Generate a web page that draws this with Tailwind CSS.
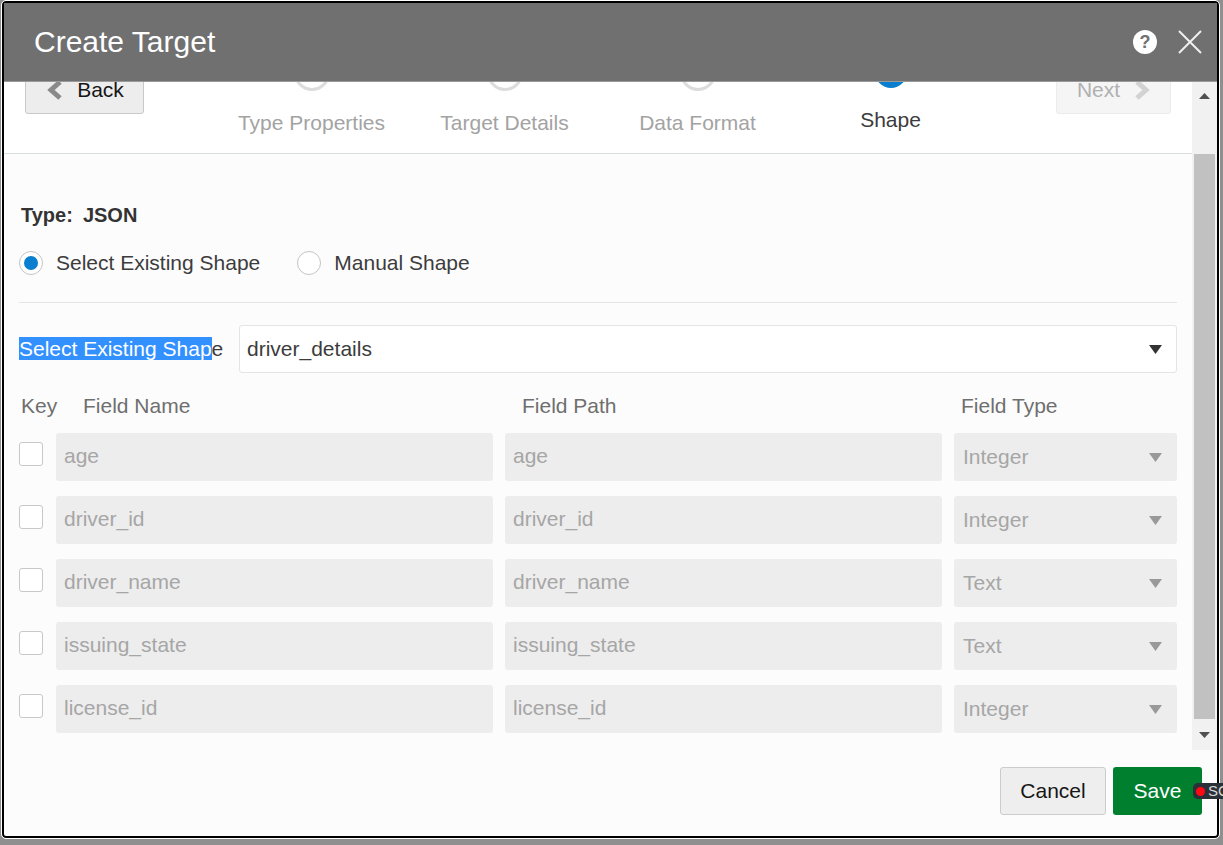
<!DOCTYPE html>
<html lang="en">
<head>
  <meta charset="UTF-8" />
  <title>Create Target</title>
  <script src="https://cdn.jsdelivr.net/npm/@tailwindcss/browser@4"></script>
</head>
<body class="bg-[#8f8f8f] h-[845px] w-[1223px] overflow-hidden font-['Liberation_Sans',Arial,sans-serif]">

  <!-- Dialog -->
  <div class="relative ml-[2px] mt-[1px] w-[1217px] h-[837px] bg-[#fcfcfc] border-2 border-black rounded-[4px] outline outline-1 outline-white flex flex-col">

    <!-- Title bar -->
    <header class="h-[79px] shrink-0 bg-[#707070] border-b border-[#9a9a9a] flex items-center pl-[30px] pr-[14px] relative z-10">
      <h1 class="text-[30px] mb-[2px] text-white">Create Target</h1>
      <div class="ml-auto flex items-center gap-[20px]">
        <svg class="w-[24px] h-[24px]" viewBox="0 0 24 24">
          <circle cx="12" cy="12" r="12" fill="white"/>
          <text x="12" y="18" text-anchor="middle" font-size="18" font-weight="700" fill="#707070" font-family="Liberation Sans">?</text>
        </svg>
        <svg class="w-[26px] h-[26px]" viewBox="0 0 26 26" fill="none" stroke="#efefef" stroke-width="2">
          <path d="M2 2l22 22M24 2L2 24"/>
        </svg>
      </div>
    </header>

    <!-- Scroll area -->
    <div class="h-[668px] shrink-0 flex overflow-hidden">
      <div class="w-[1188px] shrink-0">

        <!-- Train stops -->
        <div class="h-[72px] bg-white border-b border-[#d8dde0] flex items-start overflow-hidden relative">
          <button class="ml-[21px] mt-[-30px] w-[119px] h-[62px] shrink-0 bg-[#ededed] border border-[#c8c8c8] rounded-[3px] flex items-end justify-center pl-[2px] pb-[14px] gap-[14px] text-[21px] leading-[18px] text-[#161616]">
            <svg class="w-[16px] h-[20px] mb-[-1px]" viewBox="0 0 16 20" fill="none" stroke="#8a8a8a" stroke-width="5"><path d="M13 2L4 10l9 8"/></svg>
            Back
          </button>

          <div class="w-[193px] ml-[71px] flex flex-col items-center">
            <div class="w-[36px] h-[36px] mt-[-27px] rounded-full border-[3px] border-[#dcdcdc] bg-white"></div>
            <span class="mt-[20px] text-[21px] leading-[24px] text-[#a3a3a3]">Type Properties</span>
          </div>
          <div class="w-[193px] flex flex-col items-center">
            <div class="w-[36px] h-[36px] mt-[-27px] rounded-full border-[3px] border-[#dcdcdc] bg-white"></div>
            <span class="mt-[20px] text-[21px] leading-[24px] text-[#a3a3a3]">Target Details</span>
          </div>
          <div class="w-[193px] flex flex-col items-center">
            <div class="w-[36px] h-[36px] mt-[-27px] rounded-full border-[3px] border-[#dcdcdc] bg-white"></div>
            <span class="mt-[20px] text-[21px] leading-[24px] text-[#a3a3a3]">Data Format</span>
          </div>
          <div class="w-[193px] flex flex-col items-center">
            <div class="w-[32px] h-[32px] mt-[-26px] rounded-full bg-[#0a7fd0]"></div>
            <span class="mt-[20px] text-[21px] leading-[24px] text-[#3c3c3c]">Shape</span>
          </div>

          <button class="ml-[69px] mt-[-30px] w-[115px] h-[62px] shrink-0 bg-[#f5f5f5] border border-[#ebebeb] rounded-[3px] flex items-end justify-center pb-[14px] gap-[14px] text-[21px] leading-[18px] text-[#b0b0b0]">
            Next
            <svg class="w-[16px] h-[20px] mb-[-1px]" viewBox="0 0 16 20" fill="none" stroke="#d2d2d2" stroke-width="5"><path d="M3 2l9 8-9 8"/></svg>
          </button>
        </div>

        <!-- Form -->
        <div class="pl-[15px] w-[1173px]">
          <div class="mt-[49px] pl-[2px] h-[24px] flex items-center text-[20px] font-bold text-[#333]">Type<span class="mr-[10px]">:</span>JSON</div>

          <div class="mt-[24px] flex items-center h-[24px] text-[21px] text-[#3c3c3c]">
            <span class="w-[24px] h-[24px] rounded-full border border-[#c4c4c4] bg-white flex items-center justify-center">
              <span class="w-[14px] h-[14px] rounded-full bg-[#0a7fd0]"></span>
            </span>
            <span class="ml-[13px]">Select Existing Shape</span>
            <span class="ml-[37px] w-[24px] h-[24px] rounded-full border border-[#c4c4c4] bg-white"></span>
            <span class="ml-[13px]">Manual Shape</span>
          </div>

          <div class="mt-[27px] border-t border-[#e4e4e4]"></div>

          <div class="mt-[22px] flex items-center h-[48px]">
            <label class="w-[220px] text-[21px] text-[#3c3c3c] whitespace-nowrap"><span class="bg-[#3390ff] text-white">Select Existing Shap</span>e</label>
            <div class="w-[938px] h-[48px] bg-white border border-[#e4e4e4] rounded-[3px] flex items-center pl-[7px] pr-[14px] text-[21px] text-[#3c3c3c]">
              driver_details
              <svg class="ml-auto w-[13px] h-[9px]" viewBox="0 0 13 9"><path d="M0 0h13L6.5 9z" fill="#333"/></svg>
            </div>
          </div>

          <div class="mt-[21px] h-[24px] flex items-center text-[21px] text-[#6f6f6f]">
            <span class="w-[64px] pl-[2px]">Key</span>
            <span class="w-[439px]">Field Name</span>
            <span class="w-[439px]">Field Path</span>
            <span>Field Type</span>
          </div>

          <div class="mt-[15px] flex flex-col gap-[15px] text-[21px] text-[#a6a6a6]">
            <div class="flex items-center h-[48px]">
              <span class="w-[24px] h-[24px] mb-[6px] rounded-[3px] border border-[#c8c8c8] bg-white"></span>
              <div class="ml-[13px] w-[437px] h-[48px] pb-[2px] bg-[#ededed] rounded-[3px] flex items-center pl-[8px]">age</div>
              <div class="ml-[12px] w-[437px] h-[48px] pb-[2px] bg-[#ededed] rounded-[3px] flex items-center pl-[8px]">age</div>
              <div class="ml-[12px] w-[223px] h-[48px] bg-[#ededed] rounded-[3px] flex items-center pl-[9px] pr-[15px]">Integer<svg class="ml-auto w-[13px] h-[9px]" viewBox="0 0 13 9"><path d="M0 0h13L6.5 9z" fill="#999"/></svg></div>
            </div>
            <div class="flex items-center h-[48px]">
              <span class="w-[24px] h-[24px] mb-[6px] rounded-[3px] border border-[#c8c8c8] bg-white"></span>
              <div class="ml-[13px] w-[437px] h-[48px] pb-[2px] bg-[#ededed] rounded-[3px] flex items-center pl-[8px]">driver_id</div>
              <div class="ml-[12px] w-[437px] h-[48px] pb-[2px] bg-[#ededed] rounded-[3px] flex items-center pl-[8px]">driver_id</div>
              <div class="ml-[12px] w-[223px] h-[48px] bg-[#ededed] rounded-[3px] flex items-center pl-[9px] pr-[15px]">Integer<svg class="ml-auto w-[13px] h-[9px]" viewBox="0 0 13 9"><path d="M0 0h13L6.5 9z" fill="#999"/></svg></div>
            </div>
            <div class="flex items-center h-[48px]">
              <span class="w-[24px] h-[24px] mb-[6px] rounded-[3px] border border-[#c8c8c8] bg-white"></span>
              <div class="ml-[13px] w-[437px] h-[48px] pb-[2px] bg-[#ededed] rounded-[3px] flex items-center pl-[8px]">driver_name</div>
              <div class="ml-[12px] w-[437px] h-[48px] pb-[2px] bg-[#ededed] rounded-[3px] flex items-center pl-[8px]">driver_name</div>
              <div class="ml-[12px] w-[223px] h-[48px] bg-[#ededed] rounded-[3px] flex items-center pl-[9px] pr-[15px]">Text<svg class="ml-auto w-[13px] h-[9px]" viewBox="0 0 13 9"><path d="M0 0h13L6.5 9z" fill="#999"/></svg></div>
            </div>
            <div class="flex items-center h-[48px]">
              <span class="w-[24px] h-[24px] mb-[6px] rounded-[3px] border border-[#c8c8c8] bg-white"></span>
              <div class="ml-[13px] w-[437px] h-[48px] pb-[2px] bg-[#ededed] rounded-[3px] flex items-center pl-[8px]">issuing_state</div>
              <div class="ml-[12px] w-[437px] h-[48px] pb-[2px] bg-[#ededed] rounded-[3px] flex items-center pl-[8px]">issuing_state</div>
              <div class="ml-[12px] w-[223px] h-[48px] bg-[#ededed] rounded-[3px] flex items-center pl-[9px] pr-[15px]">Text<svg class="ml-auto w-[13px] h-[9px]" viewBox="0 0 13 9"><path d="M0 0h13L6.5 9z" fill="#999"/></svg></div>
            </div>
            <div class="flex items-center h-[48px]">
              <span class="w-[24px] h-[24px] mb-[6px] rounded-[3px] border border-[#c8c8c8] bg-white"></span>
              <div class="ml-[13px] w-[437px] h-[48px] pb-[2px] bg-[#ededed] rounded-[3px] flex items-center pl-[8px]">license_id</div>
              <div class="ml-[12px] w-[437px] h-[48px] pb-[2px] bg-[#ededed] rounded-[3px] flex items-center pl-[8px]">license_id</div>
              <div class="ml-[12px] w-[223px] h-[48px] bg-[#ededed] rounded-[3px] flex items-center pl-[9px] pr-[15px]">Integer<svg class="ml-auto w-[13px] h-[9px]" viewBox="0 0 13 9"><path d="M0 0h13L6.5 9z" fill="#999"/></svg></div>
            </div>
          </div>
        </div>
      </div>

      <!-- Scrollbar -->
      <div class="w-[25px] shrink-0 bg-[#f1f1f1] flex flex-col items-center">
        <div class="h-[72px] w-full flex justify-center pt-[11px]">
          <svg class="w-[11px] h-[6px]" viewBox="0 0 11 6"><path d="M5.5 0L11 6H0z" fill="#505050"/></svg>
        </div>
        <div class="w-[21px] h-[565px] bg-[#c1c1c1]"></div>
        <div class="flex-1 flex items-center justify-center">
          <svg class="w-[11px] h-[6px]" viewBox="0 0 11 6"><path d="M0 0h11L5.5 6z" fill="#505050"/></svg>
        </div>
      </div>
    </div>

    <!-- Footer -->
    <footer class="flex-1 flex items-start justify-end gap-[7px] pr-[15px] pt-[17px]">
      <button class="w-[106px] h-[48px] bg-[#eeeeee] border border-[#cccccc] rounded-[3px] text-[21px] text-[#161616]">Cancel</button>
      <button class="w-[89px] h-[48px] bg-[#00802f] rounded-[3px] text-[21px] font-medium text-white">Save</button>
    </footer>

    <!-- Recorder badge sitting over the dialog edge -->
    <div class="absolute left-[1189px] top-[780px] w-[40px] h-[16px] bg-[#2b2f38] rounded-l-[5px] flex items-center pl-[3px] gap-[3px] overflow-hidden text-[15px] text-[#d8d8d8]">
      <span class="w-[9px] h-[9px] shrink-0 rounded-full bg-[#ff0a14]"></span>SC
    </div>
  </div>
</body>
</html>
